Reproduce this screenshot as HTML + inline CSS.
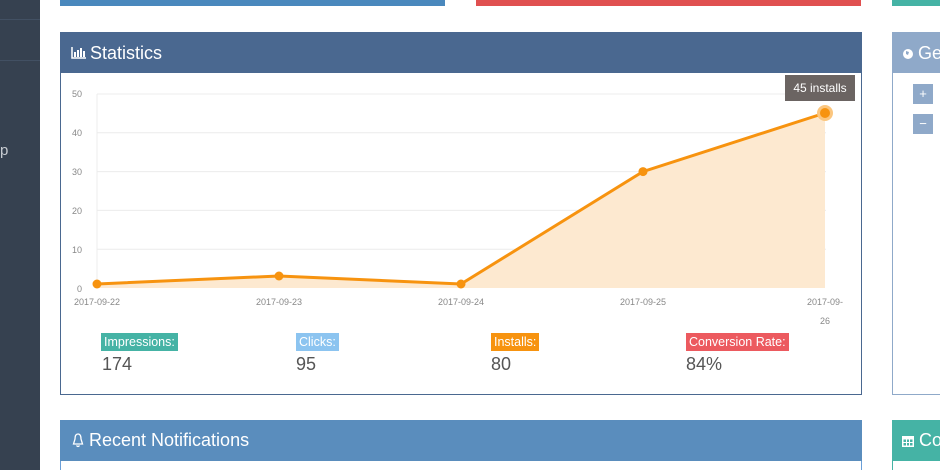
<!DOCTYPE html>
<html><head><style>
html,body{margin:0;width:940px;height:470px;overflow:hidden;background:#fff;font-family:"Liberation Sans",sans-serif;position:relative}
.a{position:absolute}
</style></head><body>
<div class="a" style="left:0;top:0;width:40px;height:470px;background:#364150"></div>
<div class="a" style="left:0;top:19px;width:40px;height:1px;background:#425063"></div>
<div class="a" style="left:0;top:60px;width:40px;height:1px;background:#425063"></div>
<div class="a" style="left:0;top:142px;color:#c8ccd2;font-size:15px">p</div>

<div class="a" style="left:60px;top:0;width:385px;height:6px;background:#4a88bd"></div>
<div class="a" style="left:476px;top:0;width:385px;height:6px;background:#e05050"></div>
<div class="a" style="left:892px;top:0;width:48px;height:6px;background:#45b3a5"></div>

<div class="a" style="left:60px;top:32px;width:800px;height:361px;border:1px solid #4a6890"></div>
<div class="a" style="left:60px;top:32px;width:802px;height:41px;background:#4a6890;color:#fff;font-size:18px;line-height:42px">
<svg class="a" style="left:11px;top:15px" width="15" height="12" viewBox="0 0 15 12"><path d="M1 0V11H15" stroke="#fff" stroke-width="1.5" fill="none"/><rect x="3" y="5" width="2" height="5" fill="#fff"/><rect x="6" y="3" width="2" height="7" fill="#fff"/><rect x="9" y="1" width="2" height="9" fill="#fff"/><rect x="12" y="4" width="2" height="6" fill="#fff"/></svg>
<span style="position:absolute;left:30px">Statistics</span></div>

<svg class="a" style="left:60px;top:73px" width="802" height="260" viewBox="60 73 802 260">
<g stroke="#ececec" stroke-width="1"><line x1="97" y1="94" x2="826" y2="94"/><line x1="97" y1="132.8" x2="826" y2="132.8"/><line x1="97" y1="171.6" x2="826" y2="171.6"/><line x1="97" y1="210.4" x2="826" y2="210.4"/><line x1="97" y1="249.2" x2="826" y2="249.2"/><line x1="97" y1="94" x2="97" y2="288"/></g>
<g font-size="9" fill="#888" font-family="Liberation Sans"><text x="72" y="97">50</text><text x="72" y="136">40</text><text x="72" y="175">30</text><text x="72" y="214">20</text><text x="72" y="253">10</text><text x="77" y="292">0</text>
<g text-anchor="middle"><text x="97" y="305">2017-09-22</text><text x="279" y="305">2017-09-23</text><text x="461" y="305">2017-09-24</text><text x="643" y="305">2017-09-25</text><text x="825" y="305">2017-09-</text><text x="825" y="324">26</text></g></g>
<path d="M97 284L279 276L461 284L643 171.6L825 113V288H97Z" fill="#fde9d0"/>
<path d="M97 284L279 276L461 284L643 171.6L825 113" stroke="#f7930f" stroke-width="3" fill="none"/>
<g fill="#f7930f"><circle cx="97" cy="284" r="4.5"/><circle cx="279" cy="276" r="4.5"/><circle cx="461" cy="284" r="4.5"/><circle cx="643" cy="171.6" r="4.5"/><circle cx="825" cy="113" r="8" fill="#fbc67f"/><circle cx="825" cy="113" r="5"/></g>
<rect x="785" y="75" width="70" height="26" fill="#6b6462"/><text x="820" y="92" text-anchor="middle" fill="#fff" font-size="12" font-family="Liberation Sans">45 installs</text>
</svg>

<div class="a" style="left:101px;top:333px;height:18px;background:#45b3a5;color:#fff;font-size:12.5px;line-height:18px;padding:0 3px">Impressions:</div>
<div class="a" style="left:296px;top:333px;height:18px;background:#8cc4f0;color:#fff;font-size:12.5px;line-height:18px;padding:0 3px">Clicks:</div>
<div class="a" style="left:491px;top:333px;height:18px;background:#f7930f;color:#fff;font-size:12.5px;line-height:18px;padding:0 3px">Installs:</div>
<div class="a" style="left:686px;top:333px;height:18px;background:#ec5a5f;color:#fff;font-size:12.5px;line-height:18px;padding:0 3px">Conversion Rate:</div>
<div class="a" style="left:102px;top:354px;color:#555;font-size:18px">174</div>
<div class="a" style="left:296px;top:354px;color:#555;font-size:18px">95</div>
<div class="a" style="left:491px;top:354px;color:#555;font-size:18px">80</div>
<div class="a" style="left:686px;top:354px;color:#555;font-size:18px">84%</div>

<div class="a" style="left:892px;top:32px;width:60px;height:361px;border:1px solid #8fa9c9"></div>
<div class="a" style="left:892px;top:32px;width:60px;height:41px;background:#8fa9c9;color:#fff;font-size:18px;line-height:42px"><svg class="a" style="left:11px;top:17px" width="10" height="10"><circle cx="5" cy="5" r="5" fill="#fff"/><path d="M3 2 L6 3 L5 6 L3 5Z" fill="#8fa9c9"/></svg><span style="position:absolute;left:26px">Ge</span></div>
<div class="a" style="left:913px;top:84px;width:20px;height:20px;background:#8fa9c9;color:#fff;font-size:13px;text-align:center;line-height:20px">+</div>
<div class="a" style="left:913px;top:114px;width:20px;height:20px;background:#8fa9c9;color:#fff;font-size:13px;text-align:center;line-height:20px">−</div>

<div class="a" style="left:60px;top:420px;width:800px;height:60px;border:1px solid #6a9fd8"></div>
<div class="a" style="left:60px;top:420px;width:802px;height:41px;background:#5a8dbd;color:#fff;font-size:18px;line-height:41px"><svg class="a" style="left:12px;top:13px" width="12" height="15" viewBox="0 0 12 15"><path d="M6 1C3.5 1 3 3.5 3 6L1.5 11H10.5L9 6C9 3.5 8.5 1 6 1ZM4.5 12.5Q6 14.5 7.5 12.5" stroke="#fff" stroke-width="1.3" fill="none"/></svg><span style="position:absolute;left:29px">Recent Notifications</span></div>
<div class="a" style="left:892px;top:420px;width:60px;height:60px;border:1px solid #45b3a5"></div>
<div class="a" style="left:892px;top:420px;width:60px;height:41px;background:#45b3a5;color:#fff;font-size:18px;line-height:41px"><svg class="a" style="left:10px;top:15px" width="12" height="12"><rect x="0" y="1" width="12" height="11" fill="#fff"/><rect x="1.5" y="4.5" width="9" height="6" fill="#45b3a5"/><path d="M4.5 4.5V10.5M7.5 4.5V10.5M1.5 7.5H10.5" stroke="#fff"/></svg><span style="position:absolute;left:27px">Co</span></div>
</body></html>
